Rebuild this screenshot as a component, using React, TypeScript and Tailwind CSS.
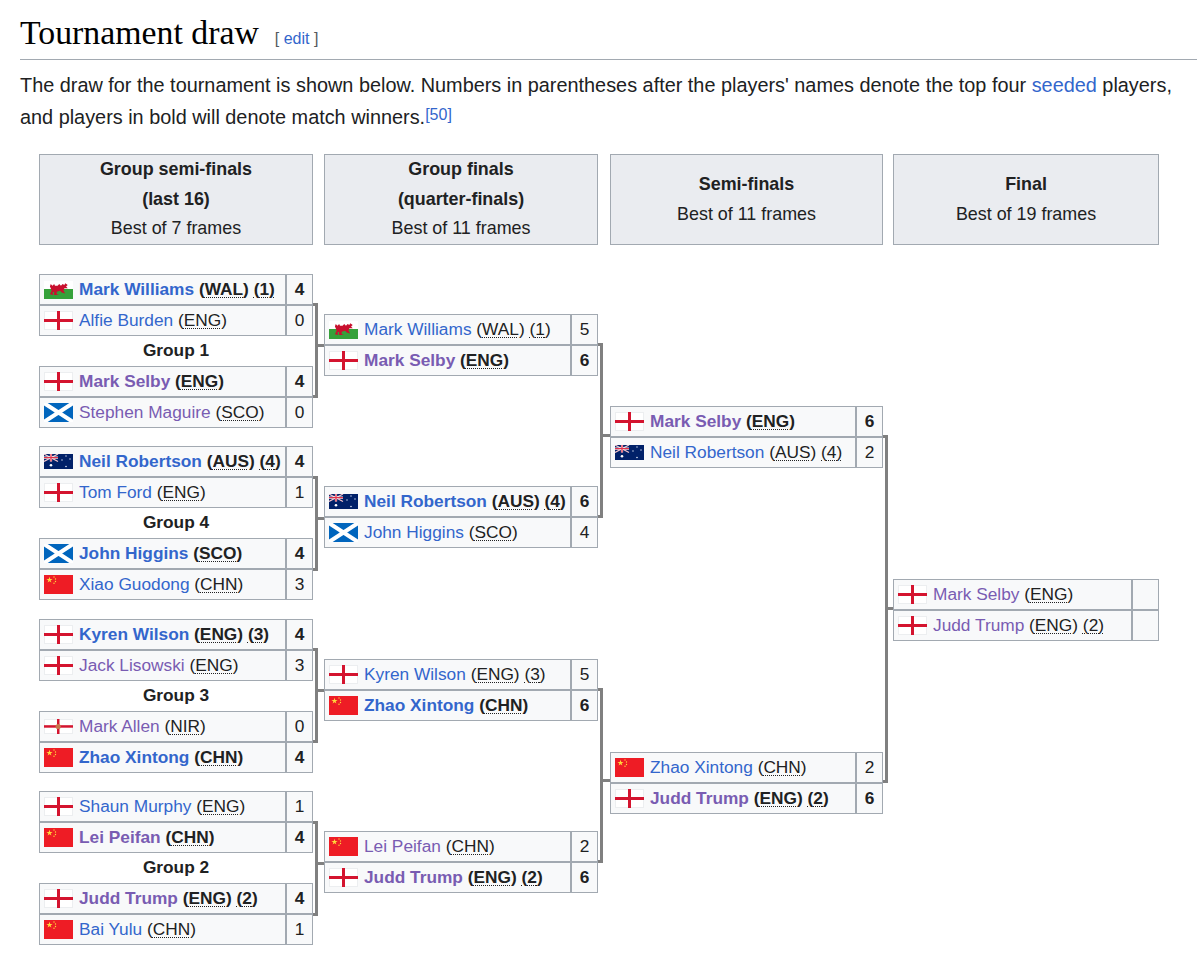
import React from "react";

type FlagCode = "WAL" | "ENG" | "SCO" | "AUS" | "CHN" | "NIR";

type Player = {
  name: string;
  code: FlagCode;
  seed?: number;
  score?: number;
  win?: boolean;
  visited?: boolean;
};

function Flag({ code }: { code: FlagCode }) {
  if (code === "ENG") {
    return (
      <svg width="29" height="19" viewBox="0 0 29 19" className="shrink-0">
        <rect x="0.5" y="0.5" width="28" height="18" fill="#fff" stroke="#eceef0" />
        <rect x="13" width="3" height="19" fill="#d4142f" />
        <rect y="8" width="29" height="3" fill="#d4142f" />
      </svg>
    );
  }
  if (code === "NIR") {
    return (
      <svg width="29" height="15" viewBox="0 0 29 15" className="shrink-0">
        <rect x="0.5" y="0.5" width="28" height="14" fill="#fff" stroke="#eceef0" />
        <rect x="13" width="2.5" height="15" fill="#d4142f" />
        <rect y="6.2" width="29" height="2.5" fill="#d4142f" />
        <circle cx="14.2" cy="7.5" r="2.6" fill="#c8744a" />
      </svg>
    );
  }
  if (code === "SCO") {
    return (
      <svg width="29" height="19" viewBox="0 0 29 19" className="shrink-0">
        <rect width="29" height="19" fill="#0065bd" />
        <path d="M0 0 L29 19 M29 0 L0 19" stroke="#fff" strokeWidth="4" />
      </svg>
    );
  }
  if (code === "CHN") {
    return (
      <svg width="29" height="19" viewBox="0 0 29 19" className="shrink-0">
        <rect width="29" height="19" fill="#ee1c25" />
        <path d="M5.5 1.8 L7.4 7.4 L2.4 4 H8.6 L3.6 7.4 Z" fill="#ffd83a" />
        <circle cx="10" cy="2" r="0.7" fill="#ffd83a" />
        <circle cx="11.5" cy="4" r="0.7" fill="#ffd83a" />
        <circle cx="11.5" cy="6.5" r="0.7" fill="#ffd83a" />
        <circle cx="10" cy="8.3" r="0.7" fill="#ffd83a" />
      </svg>
    );
  }
  if (code === "AUS") {
    return (
      <svg width="29" height="15" viewBox="0 0 29 15" className="shrink-0">
        <rect width="29" height="15" fill="#012169" />
        <path d="M0 0 L14 7.5 M14 0 L0 7.5" stroke="#f4c6cc" strokeWidth="1.2" />
        <path d="M7 0 V7.5 M0 3.7 H14" stroke="#fff" strokeWidth="2.2" />
        <path d="M7 0 V7.5 M0 3.7 H14" stroke="#e0314a" strokeWidth="1.3" />
        <circle cx="7" cy="11.3" r="1.3" fill="#fff" />
        <circle cx="22" cy="2" r="0.7" fill="#dfe6f5" />
        <circle cx="18" cy="6" r="0.7" fill="#dfe6f5" />
        <circle cx="26" cy="5" r="0.7" fill="#dfe6f5" />
        <circle cx="22" cy="12.5" r="0.8" fill="#dfe6f5" />
      </svg>
    );
  }
  return (
    <svg width="29" height="18" viewBox="0 0 29 18" className="shrink-0">
      <rect width="29" height="9" fill="#fff" />
      <rect y="8" width="29" height="10" fill="#35a13a" />
      <g transform="translate(2.5 0.5) scale(0.85)">
        <path
          d="M4 6 L5 3 L7 5 L9 3 L10 5 L13 5 L15 3 L17 5 L19 3 L21 4 L22 2 L25 4 L23 6 L25 8 L21 8 L20 11 L22 14 L18 13 L16 11 L12 12 L12 15 L15 16 L9 16 L9 12 L7 13 L8 16 L4 15 L6 11 L5 8 Z"
          fill="#c8102e"
        />
      </g>
    </svg>
  );
}

function Row({ player, last }: { player: Player; last?: boolean }) {
  return (
    <div
      className={`flex bg-[#f8f9fa] border-[#a2a9b1] ${last ? "h-[29px]" : "h-[31px] border-b-2"} ${
        player.win ? "font-bold" : ""
      }`}
    >
      <div className="flex min-w-0 flex-1 items-center gap-[6px] whitespace-nowrap pl-[4px]">
        <Flag code={player.code} />
        <span>
          <a className={player.visited ? "text-[#795cb2]" : "text-[#3366cc]"}>{player.name}</a>{" "}
          (<abbr className="underline decoration-dotted decoration-1 underline-offset-2">{player.code}</abbr>)
          {player.seed ? (
            <>
              {" "}
              <abbr className="underline decoration-dotted decoration-1 underline-offset-2">({player.seed})</abbr>
            </>
          ) : null}
        </span>
      </div>
      <div className="flex w-[27px] shrink-0 items-center justify-center border-l-2 border-[#a2a9b1]">
        {player.score}
      </div>
    </div>
  );
}

function Match({ a, b }: { a: Player; b: Player }) {
  return (
    <div className="border border-[#a2a9b1]">
      <Row player={a} />
      <Row player={b} last />
    </div>
  );
}

// bracket joining two matches, the stub runs on to the next round at the given offset
function Connector({ h, stub, className }: { h: string; stub: string; className: string }) {
  return (
    <div className={`flex ${h} ${className}`}>
      <div className="w-[5px] border-y-[3px] border-r-[3px] border-[#808080]" />
      <div className={`h-[3px] flex-1 bg-[#808080] ${stub}`} />
    </div>
  );
}

function Head({ title, sub, note }: { title: string; sub?: string; note: string }) {
  return (
    <div className="flex h-[91px] flex-col items-center justify-center border border-[#a2a9b1] bg-[#eaecf0] text-[17.9px] leading-[29.5px]">
      <div className="font-bold">{title}</div>
      {sub ? <div className="font-bold">{sub}</div> : null}
      <div>{note}</div>
    </div>
  );
}

const groups: { label: string; top: [Player, Player]; bottom: [Player, Player]; mt: string }[] = [
  {
    label: "Group 1",
    mt: "mt-[29px]",
    top: [
      { name: "Mark Williams", code: "WAL", seed: 1, score: 4, win: true },
      { name: "Alfie Burden", code: "ENG", score: 0 },
    ],
    bottom: [
      { name: "Mark Selby", code: "ENG", score: 4, win: true, visited: true },
      { name: "Stephen Maguire", code: "SCO", score: 0, visited: true },
    ],
  },
  {
    label: "Group 4",
    mt: "mt-[18px]",
    top: [
      { name: "Neil Robertson", code: "AUS", seed: 4, score: 4, win: true },
      { name: "Tom Ford", code: "ENG", score: 1 },
    ],
    bottom: [
      { name: "John Higgins", code: "SCO", score: 4, win: true },
      { name: "Xiao Guodong", code: "CHN", score: 3 },
    ],
  },
  {
    label: "Group 3",
    mt: "mt-[19px]",
    top: [
      { name: "Kyren Wilson", code: "ENG", seed: 3, score: 4, win: true },
      { name: "Jack Lisowski", code: "ENG", score: 3, visited: true },
    ],
    bottom: [
      { name: "Mark Allen", code: "NIR", score: 0, visited: true },
      { name: "Zhao Xintong", code: "CHN", score: 4, win: true },
    ],
  },
  {
    label: "Group 2",
    mt: "mt-[18px]",
    top: [
      { name: "Shaun Murphy", code: "ENG", score: 1 },
      { name: "Lei Peifan", code: "CHN", score: 4, win: true, visited: true },
    ],
    bottom: [
      { name: "Judd Trump", code: "ENG", seed: 2, score: 4, win: true, visited: true },
      { name: "Bai Yulu", code: "CHN", score: 1 },
    ],
  },
];

const quarters: { mt: string; a: Player; b: Player }[] = [
  {
    mt: "mt-[69px]",
    a: { name: "Mark Williams", code: "WAL", seed: 1, score: 5 },
    b: { name: "Mark Selby", code: "ENG", score: 6, win: true, visited: true },
  },
  {
    mt: "mt-[110px]",
    a: { name: "Neil Robertson", code: "AUS", seed: 4, score: 6, win: true },
    b: { name: "John Higgins", code: "SCO", score: 4 },
  },
  {
    mt: "mt-[111px]",
    a: { name: "Kyren Wilson", code: "ENG", seed: 3, score: 5 },
    b: { name: "Zhao Xintong", code: "CHN", score: 6, win: true },
  },
  {
    mt: "mt-[110px]",
    a: { name: "Lei Peifan", code: "CHN", score: 2, visited: true },
    b: { name: "Judd Trump", code: "ENG", seed: 2, score: 6, win: true, visited: true },
  },
];

export default function App() {
  return (
    <div className="min-h-screen bg-white pl-[20px] pr-[3px] font-['Liberation_Sans',Arial,sans-serif] text-[19.86px] text-[#202122]">
      <h2 className="flex h-[60px] items-end border-b border-[#a2a9b1] pb-[6px] font-['Liberation_Serif',serif] text-[33.8px] leading-[40px] text-black">
        Tournament draw
        <span className="mb-[2px] ml-[16px] font-['Liberation_Sans',Arial,sans-serif] text-[16px] leading-[24px] text-[#54595d]">
          [ <a className="text-[#3366cc]">edit</a> ]
        </span>
      </h2>
      <p className="mt-[9px] leading-[32px]">
        The draw for the tournament is shown below. Numbers in parentheses after the players' names denote the top four{" "}
        <a className="text-[#3366cc]">seeded</a> players, and players in bold will denote match winners.
        <sup className="top-[-0.25em] text-[16px] text-[#3366cc]">[50]</sup>
      </p>

      <div className="ml-[19px] mt-[21px] grid grid-cols-[274px_11px_274px_12px_273px_10px_266px] text-[17.3px]">
        <Head title="Group semi-finals" sub="(last 16)" note="Best of 7 frames" />
        <div />
        <Head title="Group finals" sub="(quarter-finals)" note="Best of 11 frames" />
        <div />
        <Head title="Semi-finals" note="Best of 11 frames" />
        <div />
        <Head title="Final" note="Best of 19 frames" />

        {/* Group semi-finals */}
        <div>
          {groups.map((g) => (
            <div key={g.label} className={g.mt}>
              <Match a={g.top[0]} b={g.top[1]} />
              <div className="flex h-[30px] items-center justify-center font-bold">{g.label}</div>
              <Match a={g.bottom[0]} b={g.bottom[1]} />
            </div>
          ))}
        </div>
        <div>
          <Connector h="h-[95px]" stub="mt-[41px]" className="mt-[58px]" />
          <Connector h="h-[95px]" stub="mt-[41px]" className="mt-[78px]" />
          <Connector h="h-[95px]" stub="mt-[41px]" className="mt-[77px]" />
          <Connector h="h-[95px]" stub="mt-[41px]" className="mt-[78px]" />
        </div>

        {/* Group finals */}
        <div>
          {quarters.map((q) => (
            <div key={q.a.name} className={q.mt}>
              <Match a={q.a} b={q.b} />
            </div>
          ))}
        </div>
        <div>
          <Connector h="h-[175px]" stub="mt-[91px]" className="mt-[98px]" />
          <Connector h="h-[175px]" stub="mt-[91px]" className="mt-[170px]" />
        </div>

        {/* Semi-finals */}
        <div>
          <div className="mt-[161px]">
            <Match
              a={{ name: "Mark Selby", code: "ENG", score: 6, win: true, visited: true }}
              b={{ name: "Neil Robertson", code: "AUS", seed: 4, score: 2 }}
            />
          </div>
          <div className="mt-[284px]">
            <Match
              a={{ name: "Zhao Xintong", code: "CHN", score: 2 }}
              b={{ name: "Judd Trump", code: "ENG", seed: 2, score: 6, win: true, visited: true }}
            />
          </div>
        </div>
        <div>
          <Connector h="h-[348px]" stub="mt-[172px]" className="mt-[190px]" />
        </div>

        {/* Final */}
        <div>
          <div className="mt-[334px]">
            <Match
              a={{ name: "Mark Selby", code: "ENG", visited: true }}
              b={{ name: "Judd Trump", code: "ENG", seed: 2, visited: true }}
            />
          </div>
        </div>
      </div>
    </div>
  );
}
